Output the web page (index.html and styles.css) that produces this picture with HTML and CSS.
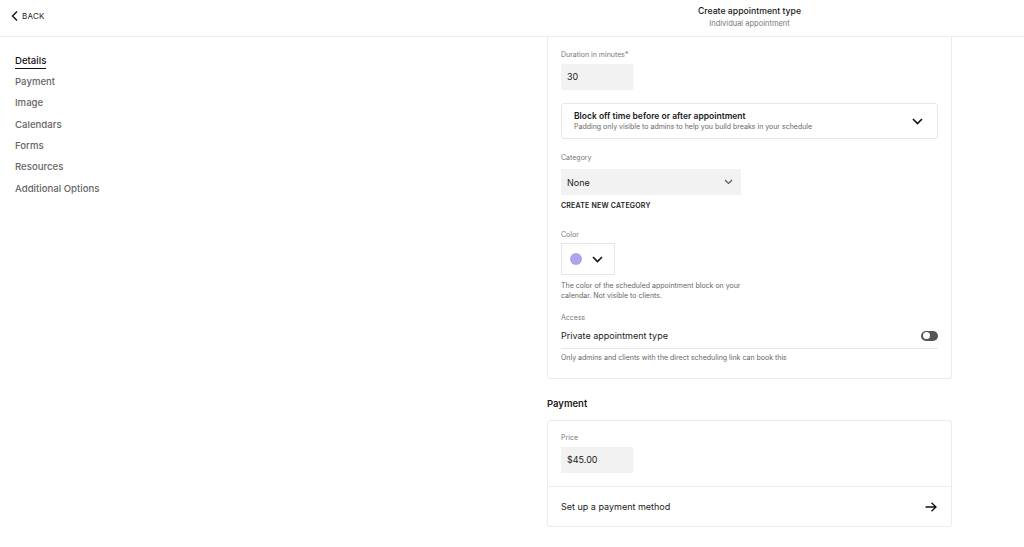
FILE: index.html
```html
<!DOCTYPE html>
<html lang="en">
<head>
  <meta charset="UTF-8">
  <meta name="viewport" content="width=device-width, initial-scale=1.0">
  <title>Create appointment type</title>
  <link rel="stylesheet" href="styles.css">
</head>
<body>
<header class="topbar">
  <a class="back" href="#">
    <svg width="8" height="10" viewBox="0 0 8 10"><polyline points="6,0.5 1.5,5 6,9.5" fill="none" stroke="#111" stroke-width="1.4"/></svg>
    BACK
  </a>
  <div class="title-block">
    <div class="title">Create appointment type</div>
    <div class="subtitle">Individual appointment</div>
  </div>
</header>

<div class="layout">
  <nav class="sidebar">
    <a class="nav-item active" href="#">Details</a>
    <a class="nav-item" href="#">Payment</a>
    <a class="nav-item" href="#">Image</a>
    <a class="nav-item" href="#">Calendars</a>
    <a class="nav-item" href="#">Forms</a>
    <a class="nav-item" href="#">Resources</a>
    <a class="nav-item" href="#">Additional Options</a>
  </nav>

  <main class="main">
    <section class="card card-top">
      <div class="label">Duration in minutes*</div>
      <div class="input">30</div>

      <div class="block-off">
        <div>
          <div class="block-title">Block off time before or after appointment</div>
          <div class="block-sub">Padding only visible to admins to help you build breaks in your schedule</div>
        </div>
        <svg width="11" height="7" viewBox="0 0 11 7"><polyline points="1,1 5.5,5.5 10,1" fill="none" stroke="#111" stroke-width="1.6"/></svg>
      </div>

      <div class="label label-category">Category</div>
      <div class="select">
        <span>None</span>
        <svg width="9" height="6" viewBox="0 0 9 6"><polyline points="1,1 4.5,4.5 8,1" fill="none" stroke="#555" stroke-width="1.1"/></svg>
      </div>
      <div class="create-link">CREATE NEW CATEGORY</div>

      <div class="label label-color">Color</div>
      <div class="color-picker">
        <span class="swatch"></span>
        <svg width="11" height="7" viewBox="0 0 11 7"><polyline points="1,1 5.5,5.5 10,1" fill="none" stroke="#111" stroke-width="1.6"/></svg>
      </div>
      <p class="help help-color">The color of the scheduled appointment block on your calendar. Not visible to clients.</p>

      <div class="label label-access">Access</div>
      <div class="toggle-row">
        <span>Private appointment type</span>
        <span class="toggle"><span class="knob"></span></span>
      </div>
      <p class="help help-access">Only admins and clients with the direct scheduling link can book this</p>
    </section>

    <h2 class="section-title">Payment</h2>
    <section class="card card-payment">
      <div class="price">
        <div class="label">Price</div>
        <div class="input">$45.00</div>
      </div>
      <a class="payment-row" href="#">
        <span>Set up a payment method</span>
        <svg width="12" height="10" viewBox="0 0 12 10"><path d="M0.5 5H11M6.5 0.8L11 5L6.5 9.2" fill="none" stroke="#111" stroke-width="1.3"/></svg>
      </a>
    </section>
  </main>
</div>
</body>
</html>
```

FILE: styles.css
```css
body {
  margin: 0;
  font-family: Inter, "Liberation Sans", sans-serif;
  color: #1a1a1a;
  background-color: #fff;
}
a {
  color: inherit;
  text-decoration: none;
}
.topbar {
  display: grid;
  grid-template-columns: 547px 405px 1fr;
  height: 36px;
  border-bottom: 1px solid #eee;
}
.back {
  display: flex;
  align-items: center;
  gap: 3px;
  align-self: start;
  margin: 11px 0 0 11px;
  font-size: 8px;
  letter-spacing: 0.2px;
  color: #222;
}
.title-block {
  text-align: center;
  padding-top: 5px;
}
.title {
  font-size: 8.7px;
  font-weight: 500;
  line-height: 12px;
}
.subtitle {
  font-size: 7.5px;
  color: #777;
  line-height: 13px;
}
.layout {
  display: grid;
  grid-template-columns: 547px 405px;
}
.sidebar {
  display: flex;
  flex-direction: column;
  align-items: flex-start;
  padding: 17px 0 0 15px;
}
.nav-item {
  font-size: 9.6px;
  font-weight: 500;
  color: #666;
  line-height: 14px;
  margin-bottom: 7.4px;
}
.nav-item.active {
  color: #111;
  border-bottom: 1.5px solid #111;
  line-height: 13px;
  padding-bottom: 1px;
  margin-bottom: 5.8px;
}
.card {
  border: 1px solid #ebebeb;
  border-radius: 3px;
}
.card-top {
  border-top: none;
  border-radius: 0 0 3px 3px;
  padding: 13px 13px 15px;
}
.label {
  font-size: 7px;
  color: #777;
  line-height: 10px;
}
.input {
  width: 66px;
  height: 26px;
  margin-top: 4px;
  padding-left: 6px;
  background-color: #f2f2f2;
  font-size: 9px;
  line-height: 26px;
}
.block-off {
  display: flex;
  align-items: center;
  justify-content: space-between;
  margin-top: 13px;
  height: 34px;
  padding: 0 14px 0 12px;
  border: 1px solid #e6e6e6;
  border-radius: 3px;
}
.block-title {
  font-size: 8.5px;
  font-weight: 600;
  line-height: 11px;
}
.block-sub {
  font-size: 7px;
  color: #666;
  line-height: 10px;
}
.label-category {
  margin-top: 14px;
}
.select {
  display: flex;
  align-items: center;
  justify-content: space-between;
  width: 166px;
  height: 26px;
  margin-top: 6px;
  padding: 0 8px 0 6px;
  background-color: #f2f2f2;
  font-size: 9px;
}
.create-link {
  margin-top: 6px;
  font-size: 7px;
  font-weight: 600;
  letter-spacing: 0.2px;
  line-height: 10px;
  color: #222;
}
.label-color {
  margin-top: 19px;
}
.color-picker {
  display: flex;
  align-items: center;
  gap: 10px;
  width: 36px;
  height: 30px;
  margin-top: 3px;
  padding: 0 8px;
  border: 1px solid #e6e6e6;
}
.swatch {
  width: 12px;
  height: 12px;
  border-radius: 50%;
  background-color: #b3a3ea;
}
.help {
  margin: 0;
  font-size: 7px;
  color: #666;
  line-height: 10px;
}
.help-color {
  width: 190px;
  margin-top: 6px;
}
.label-access {
  margin-top: 12px;
}
.toggle-row {
  display: flex;
  align-items: center;
  justify-content: space-between;
  height: 25px;
  border-bottom: 1px solid #e8e8e8;
  font-size: 9px;
}
.toggle {
  position: relative;
  width: 17px;
  height: 10px;
  border-radius: 5px;
  background-color: #555;
}
.toggle .knob {
  position: absolute;
  left: 1.5px;
  top: 1.5px;
  width: 7px;
  height: 7px;
  border-radius: 50%;
  background-color: #fff;
}
.help-access {
  margin-top: 4px;
}
.section-title {
  margin: 19px 0 10px;
  font-size: 9.5px;
  font-weight: 600;
  line-height: 12px;
}
.price {
  padding: 12px 13px 13px;
  border-bottom: 1px solid #eee;
}
.payment-row {
  display: flex;
  align-items: center;
  justify-content: space-between;
  height: 39px;
  padding: 0 14px 0 13px;
  font-size: 9px;
}
```
